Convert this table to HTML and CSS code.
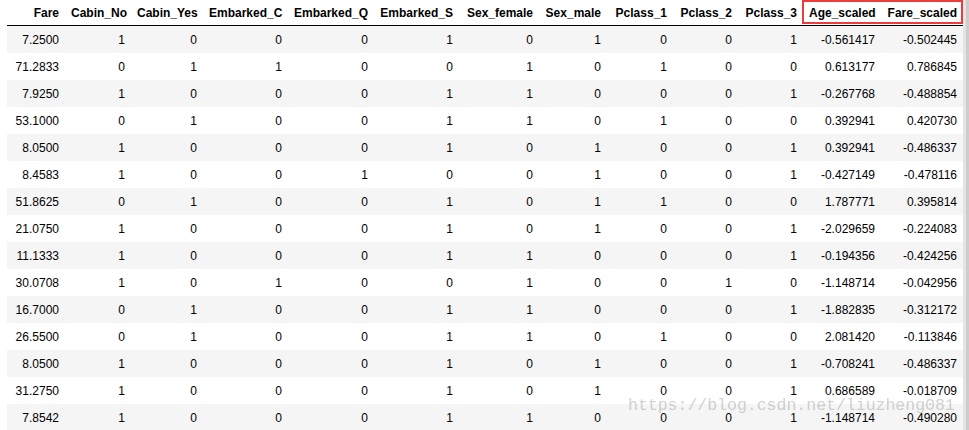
FILE: index.html
```html
<!DOCTYPE html>
<html>
<head>
<meta charset="utf-8">
<link rel="stylesheet" href="styles.css">
</head>
<body>
<div class="page">
  <div class="frame">
    <table class="df">
      <colgroup>
        <col class="w58"><col class="w66"><col class="w72"><col class="w85"><col class="w86"><col class="w85"><col class="w80"><col class="w68"><col class="w66"><col class="w65"><col class="w65"><col class="w78"><col class="w82">
      </colgroup>
      <thead>
        <tr><th>Fare</th><th>Cabin_No</th><th>Cabin_Yes</th><th>Embarked_C</th><th>Embarked_Q</th><th>Embarked_S</th><th>Sex_female</th><th>Sex_male</th><th>Pclass_1</th><th>Pclass_2</th><th>Pclass_3</th><th>Age_scaled</th><th>Fare_scaled</th></tr>
      </thead>
      <tbody>
        <tr><td>7.2500</td><td>1</td><td>0</td><td>0</td><td>0</td><td>1</td><td>0</td><td>1</td><td>0</td><td>0</td><td>1</td><td>-0.561417</td><td>-0.502445</td></tr>
        <tr><td>71.2833</td><td>0</td><td>1</td><td>1</td><td>0</td><td>0</td><td>1</td><td>0</td><td>1</td><td>0</td><td>0</td><td>0.613177</td><td>0.786845</td></tr>
        <tr><td>7.9250</td><td>1</td><td>0</td><td>0</td><td>0</td><td>1</td><td>1</td><td>0</td><td>0</td><td>0</td><td>1</td><td>-0.267768</td><td>-0.488854</td></tr>
        <tr><td>53.1000</td><td>0</td><td>1</td><td>0</td><td>0</td><td>1</td><td>1</td><td>0</td><td>1</td><td>0</td><td>0</td><td>0.392941</td><td>0.420730</td></tr>
        <tr><td>8.0500</td><td>1</td><td>0</td><td>0</td><td>0</td><td>1</td><td>0</td><td>1</td><td>0</td><td>0</td><td>1</td><td>0.392941</td><td>-0.486337</td></tr>
        <tr><td>8.4583</td><td>1</td><td>0</td><td>0</td><td>1</td><td>0</td><td>0</td><td>1</td><td>0</td><td>0</td><td>1</td><td>-0.427149</td><td>-0.478116</td></tr>
        <tr><td>51.8625</td><td>0</td><td>1</td><td>0</td><td>0</td><td>1</td><td>0</td><td>1</td><td>1</td><td>0</td><td>0</td><td>1.787771</td><td>0.395814</td></tr>
        <tr><td>21.0750</td><td>1</td><td>0</td><td>0</td><td>0</td><td>1</td><td>0</td><td>1</td><td>0</td><td>0</td><td>1</td><td>-2.029659</td><td>-0.224083</td></tr>
        <tr><td>11.1333</td><td>1</td><td>0</td><td>0</td><td>0</td><td>1</td><td>1</td><td>0</td><td>0</td><td>0</td><td>1</td><td>-0.194356</td><td>-0.424256</td></tr>
        <tr><td>30.0708</td><td>1</td><td>0</td><td>1</td><td>0</td><td>0</td><td>1</td><td>0</td><td>0</td><td>1</td><td>0</td><td>-1.148714</td><td>-0.042956</td></tr>
        <tr><td>16.7000</td><td>0</td><td>1</td><td>0</td><td>0</td><td>1</td><td>1</td><td>0</td><td>0</td><td>0</td><td>1</td><td>-1.882835</td><td>-0.312172</td></tr>
        <tr><td>26.5500</td><td>0</td><td>1</td><td>0</td><td>0</td><td>1</td><td>1</td><td>0</td><td>1</td><td>0</td><td>0</td><td>2.081420</td><td>-0.113846</td></tr>
        <tr><td>8.0500</td><td>1</td><td>0</td><td>0</td><td>0</td><td>1</td><td>0</td><td>1</td><td>0</td><td>0</td><td>1</td><td>-0.708241</td><td>-0.486337</td></tr>
        <tr><td>31.2750</td><td>1</td><td>0</td><td>0</td><td>0</td><td>1</td><td>0</td><td>1</td><td>0</td><td>0</td><td>1</td><td>0.686589</td><td>-0.018709</td></tr>
        <tr><td>7.8542</td><td>1</td><td>0</td><td>0</td><td>0</td><td>1</td><td>1</td><td>0</td><td>0</td><td>0</td><td>1</td><td>-1.148714</td><td>-0.490280</td></tr>
      </tbody>
    </table>
    <div class="highlight"></div>
    <div class="watermark">https://blog.csdn.net/liuzheng081</div>
  </div>
  <div class="scrollbar"></div>
</div>
</body>
</html>
```
FILE: styles.css
```css
html, body {
  margin: 0;
  padding: 0;
  background: #fff;
}
.page {
  display: flex;
  width: 969px;
  height: 430px;
  overflow: hidden;
}
.frame {
  position: relative;
  width: 963px;
  padding-left: 7px;
  box-sizing: border-box;
}
.df {
  table-layout: fixed;
  width: 956px;
  border-collapse: collapse;
  border-spacing: 0;
  font-family: "Liberation Sans", Arial, sans-serif;
  font-size: 12px;
  color: #000;
}
.w58 { width: 58px; }
.w66 { width: 66px; }
.w72 { width: 72px; }
.w85 { width: 85px; }
.w86 { width: 86px; }
.w80 { width: 80px; }
.w68 { width: 68px; }
.w65 { width: 65px; }
.w78 { width: 78px; }
.w82 { width: 82px; }
.df th, .df td {
  text-align: right;
  vertical-align: middle;
  padding: 0 6px;
  white-space: nowrap;
  line-height: 14px;
}
.df th {
  font-weight: bold;
  height: 25px;
  border-bottom: 1px solid #000;
}
.df td {
  height: 27px;
}
.df tbody tr:nth-child(odd) {
  background: #f5f5f5;
}
.highlight {
  position: absolute;
  left: 802px;
  top: 0;
  width: 161px;
  height: 24px;
  box-sizing: border-box;
  border: 2px solid #ee3b3b;
}
.watermark {
  position: absolute;
  left: 628px;
  top: 396px;
  font-family: "Liberation Mono", "Courier New", monospace;
  font-size: 16.5px;
  line-height: 20px;
  color: rgba(140, 140, 140, 0.4);
  white-space: nowrap;
}
.scrollbar {
  width: 6px;
  flex: none;
  background: linear-gradient(to right, #e4e4e4 0, #e4e4e4 3px, #cdcdcd 3px);
}
```
